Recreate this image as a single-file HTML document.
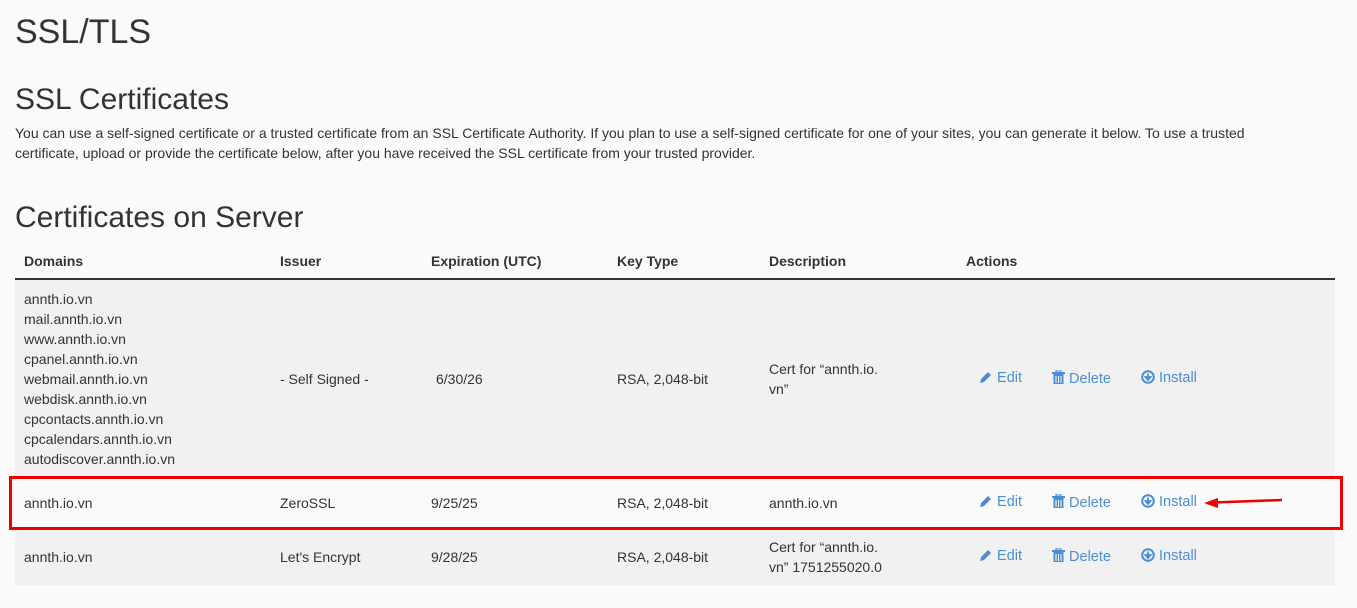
<!DOCTYPE html>
<html><head><meta charset="utf-8"><style>
body{margin:0;width:1357px;height:608px;background:#fafafa;font-family:"Liberation Sans",sans-serif;color:#333;position:relative;overflow:hidden}
.a{position:absolute;white-space:nowrap}
h1{position:absolute;margin:0;font-weight:300;font-size:34px;left:15px;top:13px;color:#333}
h2{position:absolute;margin:0;font-weight:400;font-size:30px;left:15px;color:#333}
p{position:absolute;margin:0;left:15px;top:123px;width:1295px;font-size:14px;line-height:20px}
.th{font-weight:bold;font-size:14px;top:253px}
.row{position:absolute;left:15px;width:1320px}
.t{font-size:14px;line-height:20px}
.lk{color:#4a8fd4;font-size:14.5px}
svg{vertical-align:-2px}
</style></head><body>
<h1>SSL/TLS</h1>
<h2 style="top:83px">SSL Certificates</h2>
<p>You can use a self-signed certificate or a trusted certificate from an SSL Certificate Authority. If you plan to use a self-signed certificate for one of your sites, you can generate it below. To use a trusted certificate, upload or provide the certificate below, after you have received the SSL certificate from your trusted provider.</p>
<h2 style="top:201px">Certificates on Server</h2>
<div class="a th" style="left:24px">Domains</div>
<div class="a th" style="left:280px">Issuer</div>
<div class="a th" style="left:431px">Expiration (UTC)</div>
<div class="a th" style="left:617px">Key Type</div>
<div class="a th" style="left:769px">Description</div>
<div class="a th" style="left:966px">Actions</div>
<div class="row" style="top:278px;height:2px;background:#333"></div>
<div class="row" style="top:280px;height:196px;background:#f1f1f1"></div>
<div class="row" style="top:530px;height:55px;background:#f1f1f1"></div>

<div class="a t" style="left:24px;top:289px">annth.io.vn<br>mail.annth.io.vn<br>www.annth.io.vn<br>cpanel.annth.io.vn<br>webmail.annth.io.vn<br>webdisk.annth.io.vn<br>cpcontacts.annth.io.vn<br>cpcalendars.annth.io.vn<br>autodiscover.annth.io.vn</div>
<div class="a t" style="left:280px;top:369px">- Self Signed -</div>
<div class="a t" style="left:436px;top:369px">6/30/26</div>
<div class="a t" style="left:617px;top:369px">RSA, 2,048-bit</div>
<div class="a t" style="left:769px;top:359px">Cert for “annth.io.<br>vn”</div>

<div class="a t" style="left:24px;top:493px">annth.io.vn</div>
<div class="a t" style="left:280px;top:493px">ZeroSSL</div>
<div class="a t" style="left:431px;top:493px">9/25/25</div>
<div class="a t" style="left:617px;top:493px">RSA, 2,048-bit</div>
<div class="a t" style="left:769px;top:493px">annth.io.vn</div>

<div class="a t" style="left:24px;top:547px">annth.io.vn</div>
<div class="a t" style="left:280px;top:547px">Let's Encrypt</div>
<div class="a t" style="left:431px;top:547px">9/28/25</div>
<div class="a t" style="left:617px;top:547px">RSA, 2,048-bit</div>
<div class="a t" style="left:769px;top:537px">Cert for “annth.io.<br>vn” 1751255020.0</div>

<div id="acts"></div>
<script>
var ys=[370,494,548],h='';
var pen='<svg width="14" height="14" viewBox="0 0 14 14"><path d="M1 13l1-4 7-7 3 3-7 7z M10 1l3 3" fill="#4a8fd4"/></svg>';
var tr='<svg width="13" height="15" viewBox="0 0 13 15"><rect x="0" y="2" width="13" height="2" fill="#4a8fd4"/><rect x="4" y="0" width="5" height="2" fill="none" stroke="#4a8fd4"/><path d="M1.5 4h10v10h-10z" fill="#4a8fd4"/><path d="M4 6v7M6.5 6v7M9 6v7" stroke="#fff" stroke-width="1"/></svg>';
var dl='<svg width="14" height="14" viewBox="0 0 14 14"><circle cx="7" cy="7" r="5.8" fill="none" stroke="#4a8fd4" stroke-width="2"/><path d="M7 3.5v5M4.5 7l2.5 3 2.5-3z" stroke="#4a8fd4" stroke-width="1.8" fill="#4a8fd4"/></svg>';
ys.forEach(function(y){
h+='<div class="a lk" style="left:979px;top:'+y+'px">'+pen+' Edit</div>';
h+='<div class="a lk" style="left:1052px;top:'+y+'px">'+tr+' Delete</div>';
h+='<div class="a lk" style="left:1141px;top:'+y+'px">'+dl+' Install</div>';
});
document.getElementById('acts').innerHTML=h;
</script>
<div class="a" style="left:9px;top:476px;width:1328px;height:48px;border:3px solid #e00"></div>
<svg class="a" style="left:1200px;top:494px" width="86" height="16"><path d="M14 8.5L82 6" stroke="#e00" stroke-width="2.5"/><path d="M4 9l14-5v10z" fill="#e00"/></svg>
</body></html>
